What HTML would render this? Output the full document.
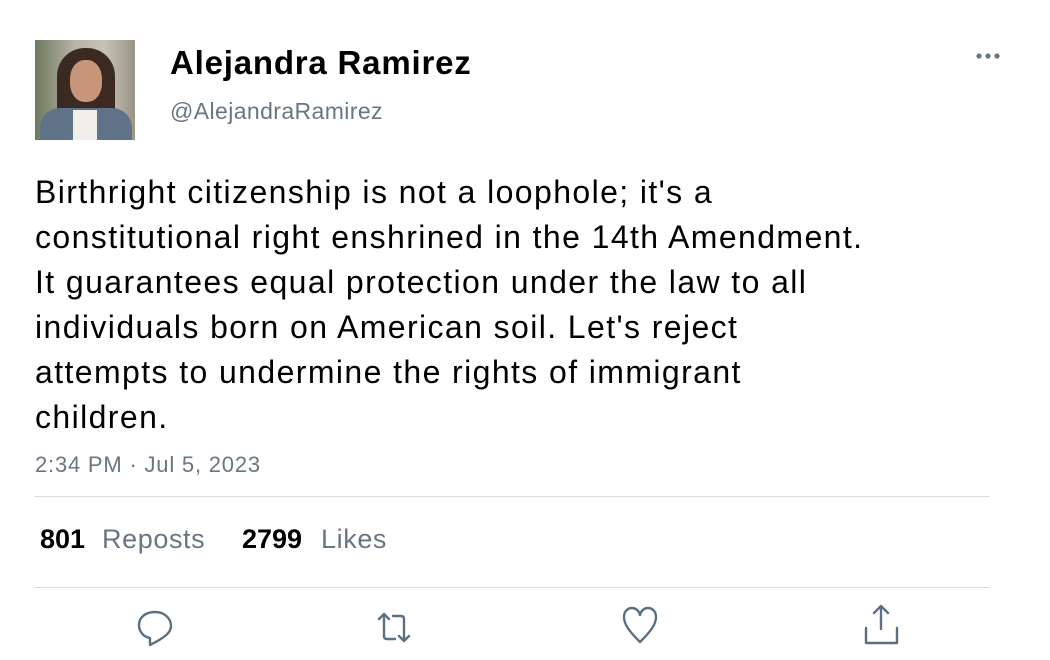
<!DOCTYPE html>
<html><head><style>
body{margin:0;width:1050px;height:660px;background:#fff;font-family:"Liberation Sans",Arial,sans-serif;position:relative;overflow:hidden}
.a{position:absolute;white-space:nowrap}
</style></head><body>
<div class="a" style="left:35px;top:40px;width:100px;height:100px;background:linear-gradient(90deg,#6d7a5e 0%,#b9b3a8 40%,#c8c0b5 70%,#9a9486 100%);overflow:hidden">
<div class="a" style="left:22px;top:8px;width:58px;height:92px;background:#3b2a22;border-radius:28px 28px 10px 10px"></div>
<div class="a" style="left:35px;top:20px;width:32px;height:42px;background:#c9957a;border-radius:45%"></div>
<div class="a" style="left:5px;top:68px;width:92px;height:40px;background:#5f7288;border-radius:20px 20px 0 0"></div>
<div class="a" style="left:38px;top:70px;width:24px;height:30px;background:#f1eeea"></div>
</div>
<div class="a" style="left:170px;top:44px;font-size:33px;letter-spacing:0.8px;font-weight:bold;color:#000">Alejandra Ramirez</div>
<div class="a" style="left:170px;top:98px;font-size:23px;letter-spacing:0.4px;color:#687684">@AlejandraRamirez</div>
<svg class="a" style="left:970px;top:48px" width="40" height="16" fill="#687684"><circle cx="9" cy="8" r="2.6"/><circle cx="18" cy="8" r="2.6"/><circle cx="27" cy="8" r="2.6"/></svg>
<div class="a" style="left:35px;top:170px;width:960px;font-size:32px;letter-spacing:1.4px;line-height:45px;color:#000">Birthright citizenship is not a loophole; it's a<br>constitutional right enshrined in the 14th Amendment.<br>It guarantees equal protection under the law to all<br>individuals born on American soil. Let's reject<br>attempts to undermine the rights of immigrant<br>children.</div>
<div class="a" style="left:35px;top:452px;font-size:22px;letter-spacing:0.8px;color:#687684">2:34 PM · Jul 5, 2023</div>
<div class="a" style="left:35px;top:496px;width:954px;height:1px;background:#d5dbe0"></div>
<div class="a" style="left:40px;top:524px;font-size:27px;font-weight:bold;color:#000">801</div>
<div class="a" style="left:102px;top:524px;font-size:27px;letter-spacing:0.6px;color:#687684">Reposts</div>
<div class="a" style="left:242px;top:524px;font-size:27px;font-weight:bold;color:#000">2799</div>
<div class="a" style="left:321px;top:524px;font-size:27px;letter-spacing:0.6px;color:#687684">Likes</div>
<div class="a" style="left:35px;top:587px;width:954px;height:1px;background:#d5dbe0"></div>
<svg class="a" style="left:0;top:600px" width="1050" height="60" fill="none" stroke="#5b7083" stroke-width="2.4" stroke-linecap="round" stroke-linejoin="round">
<path d="M150 45 V38 C143 37 139 31 139 25 C139 17 146 12 155 12 C164 12 171 18 171 26 C171 32 166 37 150 45 Z"/>
<path d="M384 14 L379 19 M384 14 L389 19 M384 14 V36 Q384 39 387 39 H395 M393 16 H401 Q404 16 404 19 V41 M399 36 L404 41 L409 36"/>
<path d="M640 42 C630 32 624 25 624 17 C624 11 628 8 632 8 C636 8 639 11 640 15 C641 11 644 8 648 8 C652 8 656 11 656 17 C656 25 650 32 640 42 Z"/>
<path d="M881 6 V29 M874 13 L881 6 L888 13 M866 28 V43 H897 V28"/>
</svg>
</body></html>
